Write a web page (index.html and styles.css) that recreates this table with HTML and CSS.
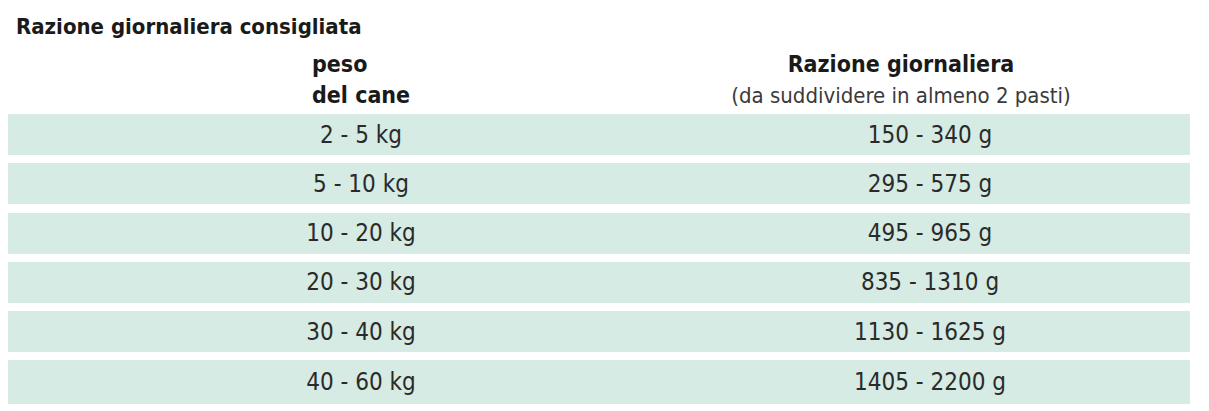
FILE: index.html
```html
<!DOCTYPE html>
<html lang="it">
<head>
<meta charset="utf-8">
<title>Razione giornaliera consigliata</title>
<link rel="stylesheet" href="styles.css">
</head>
<body>
<div class="ration">
  <h1 class="ration-title">Razione giornaliera consigliata</h1>
  <div class="ration-head">
    <div class="head-weight"><strong>peso<br>del cane</strong></div>
    <div class="head-dose"><strong>Razione giornaliera</strong><br><span class="head-note">(da suddividere in almeno 2 pasti)</span></div>
  </div>
  <div class="ration-rows">
    <div class="row"><span class="cell-weight">2 - 5 kg</span><span class="cell-dose">150 - 340 g</span></div>
    <div class="row"><span class="cell-weight">5 - 10 kg</span><span class="cell-dose">295 - 575 g</span></div>
    <div class="row"><span class="cell-weight">10 - 20 kg</span><span class="cell-dose">495 - 965 g</span></div>
    <div class="row"><span class="cell-weight">20 - 30 kg</span><span class="cell-dose">835 - 1310 g</span></div>
    <div class="row"><span class="cell-weight">30 - 40 kg</span><span class="cell-dose">1130 - 1625 g</span></div>
    <div class="row row-last"><span class="cell-weight">40 - 60 kg</span><span class="cell-dose">1405 - 2200 g</span></div>
  </div>
</div>
</body>
</html>
```

FILE: styles.css
```css
html, body {
  background: #ffffff;
}
body {
  margin: 8px;
  font-family: "Liberation Sans Narrow", "DejaVu Sans Condensed", "Liberation Sans", sans-serif;
  font-stretch: condensed;
  color: #262626;
}
.ration {
  width: 1182px;
}
.ration-title {
  margin: 0;
  padding-left: 8px;
  font-size: 22px;
  line-height: 38px;
  font-weight: 700;
  color: #1a1a1a;
}
.ration-head {
  display: grid;
  grid-template-columns: 604px 578px;
  margin-top: 3px;
  font-size: 23px;
  line-height: 31px;
}
.ration-head strong {
  font-weight: 700;
  color: #1a1a1a;
}
.head-weight {
  padding-left: 304px;
  text-align: left;
}
.head-dose {
  text-align: center;
}
.head-note {
  font-size: 22px;
  color: #3a3a3a;
}
.ration-rows {
  display: flex;
  flex-direction: column;
  gap: 8.25px;
  margin-top: 3px;
}
.row {
  display: grid;
  grid-template-columns: 706px 432px 1fr;
  align-items: center;
  height: 41px;
  background: #d5ebe3;
  font-size: 24px;
}
.row-last {
  height: 44px;
}
.cell-weight,
.cell-dose {
  text-align: center;
  color: #2a2a2a;
}
```
